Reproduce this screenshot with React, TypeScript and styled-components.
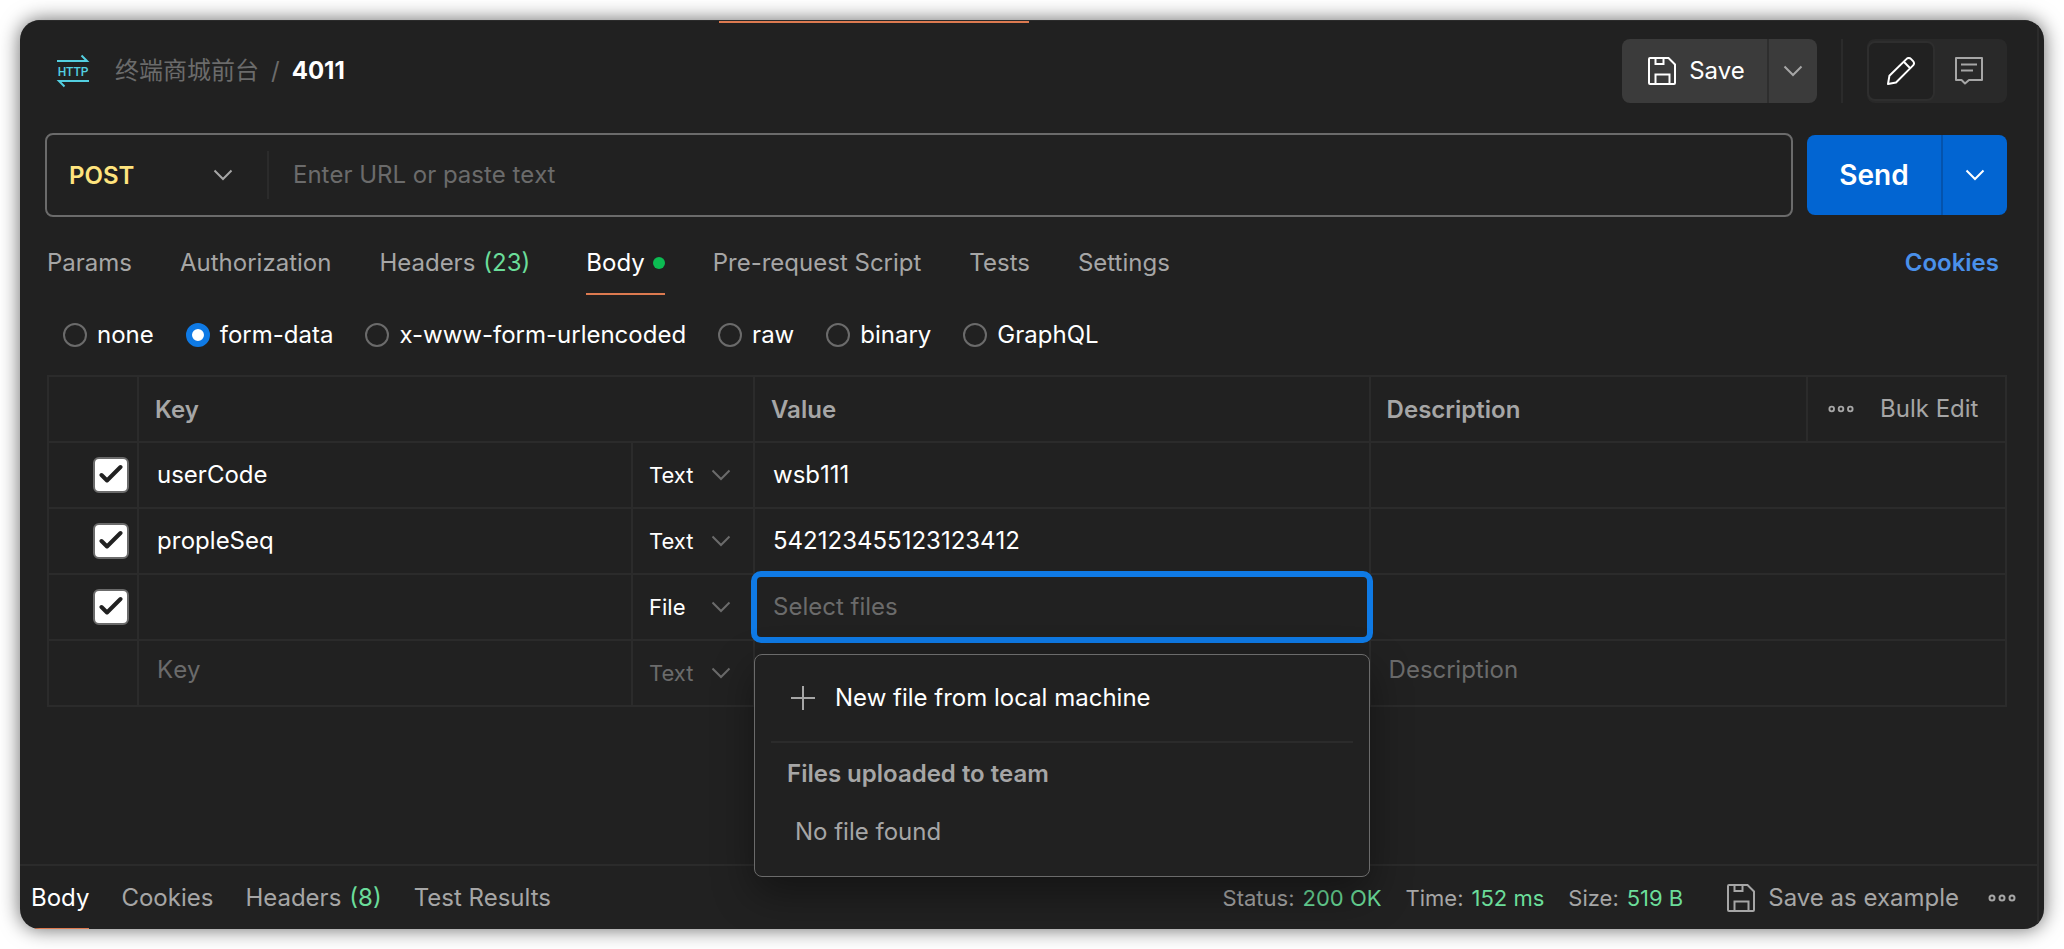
import React from "react";
import styled, { createGlobalStyle } from "styled-components";

const GlobalStyle = createGlobalStyle`
  * { box-sizing: border-box; }
  html { background: #ffffff; }
  body { margin: 0; }
  body, button, input, select, table {
    font-family: Inter, "Noto Sans CJK SC", sans-serif;
    font-size: 24px;
    line-height: 32px;
  }
  button { cursor: pointer; }
  svg { display: block; flex: none; }
`;

const color = {
  bg: "#212121",
  line: "#2b2b2b",
  outline: "#6b6b6b",
  muted: "#a6a6a6",
  faint: "#6b6b6b",
  text: "#ffffff",
  green: "#6bdd9a",
  orange: "#dd7a50",
  blue: "#0265d2",
};

const Page = styled.div`
  min-height: 100vh;
  padding: 20px;
  display: flex;
`;

const Window = styled.div`
  flex: 1;
  min-width: 0;
  display: flex;
  flex-direction: column;
  padding-right: 5px;
  border-radius: 20px;
  overflow: hidden;
  background: ${color.bg};
  box-shadow: 0 0 20px rgba(0, 0, 0, 0.6);
`;

const Pane = styled.div`
  flex: 1;
  display: flex;
  flex-direction: column;
  border-right: 2px solid ${color.line};
`;

const TabStrip = styled.div`
  height: 3px;
  border-top: 1px solid ${color.line};
`;

const ActiveTabLine = styled.div`
  height: 2px;
  width: 310px;
  margin-left: 699px;
  background: ${color.orange};
`;

const Request = styled.main`
  flex: 1;
  padding: 16px 30px 23px 25px;
`;

const Header = styled.header`
  display: flex;
  align-items: center;
  justify-content: space-between;
`;

const Crumbs = styled.nav`
  display: flex;
  align-items: center;
  gap: 12px;
  padding-left: 12px;
  color: ${color.faint};
`;

const CrumbLink = styled.a`
  margin-left: 14px;
  color: inherit;
  text-decoration: none;
`;

const CrumbName = styled.strong`
  font-weight: 700;
  font-kerning: none;
  color: ${color.text};
`;

const HeaderActions = styled.div`
  display: flex;
  gap: 24px;
`;

const SplitButton = styled.div<{ $tone: "neutral" | "primary" }>`
  display: flex;
  flex: none;
  height: ${(p) => (p.$tone === "primary" ? 80 : 64)}px;
  border-radius: 8px;
  overflow: hidden;
  background: ${(p) => (p.$tone === "primary" ? color.blue : "#3b3b3b")};

  button + button {
    border-left: 2px solid ${(p) => (p.$tone === "primary" ? "#0453ad" : "#2e2e2e")};
  }
`;

const PlainButton = styled.button`
  display: flex;
  align-items: center;
  justify-content: center;
  padding: 0;
  border: 0;
  background: none;
  color: ${color.muted};
`;

const SaveButton = styled(PlainButton)`
  gap: 13px;
  width: 145px;
  padding-left: 4px;
  color: ${color.text};
`;

const SaveMenuButton = styled(PlainButton)`
  width: 50px;
`;

const SendButton = styled(PlainButton)`
  width: 134px;
  font-size: 28px;
  font-weight: 600;
  color: ${color.text};
`;

const SendMenuButton = styled(PlainButton)`
  width: 66px;
  color: ${color.text};
`;

const Divider = styled.div`
  width: 2px;
  background: ${color.line};
`;

const ViewToggle = styled.div`
  display: flex;
  padding: 2px 4px 2px 0;
  border-radius: 8px;
  background: #292929;
`;

const ViewButton = styled(PlainButton)<{ $active?: boolean }>`
  width: 68px;
  border: 2px solid ${(p) => (p.$active ? "#2e2e2e" : "transparent")};
  border-radius: 8px;
  background: ${(p) => (p.$active ? color.bg : "transparent")};
  color: ${(p) => (p.$active ? color.text : color.muted)};
`;

const UrlRow = styled.form`
  display: flex;
  align-items: center;
  gap: 14px;
  margin-top: 30px;
`;

const UrlBox = styled.div`
  flex: 1;
  display: flex;
  align-items: center;
  height: 84px;
  border: 2px solid ${color.outline};
  border-radius: 8px;
`;

const SelectWrap = styled.div`
  position: relative;
  height: 100%;
  display: flex;
`;

const SelectChevron = styled.span<{ $right: number; $bright?: boolean }>`
  position: absolute;
  top: 0;
  bottom: 0;
  right: ${(p) => p.$right}px;
  display: flex;
  align-items: center;
  pointer-events: none;
  color: ${(p) => (p.$bright ? color.muted : color.faint)};
`;

const MethodSelect = styled.select`
  appearance: none;
  width: 220px;
  padding: 2px 22px 0;
  border: 0;
  outline: 0;
  background: none;
  font-weight: 600;
  color: #ffe47e;
`;

const UrlDivider = styled(Divider)`
  height: 48px;
`;

const TextInput = styled.input`
  display: block;
  width: 100%;
  height: 64px;
  padding: 0 18px 2px;
  border: 0;
  outline: 0;
  background: none;
  font-kerning: none;
  color: ${color.text};

  &::placeholder {
    color: ${color.faint};
    opacity: 1;
  }
`;

const UrlInput = styled(TextInput)`
  flex: 1;
  padding: 0 24px 2px;
`;

const DraftInput = styled(TextInput)`
  height: 58px;
  margin-bottom: 6px;
`;

const Tabs = styled.nav`
  display: flex;
  gap: 48px;
  margin: 18px 0 0 2px;
`;

const Tab = styled.button<{ $active?: boolean; $counted?: boolean }>`
  display: flex;
  align-items: center;
  gap: 8px;
  height: 60px;
  padding: 0 ${(p) => (p.$counted ? 8 : 0)}px 2px 0;
  border: 0;
  border-bottom: 2px solid ${(p) => (p.$active ? color.orange : "transparent")};
  background: none;
  white-space: nowrap;
  color: ${(p) => (p.$active ? color.text : color.muted)};
`;

const Count = styled.span`
  color: ${color.green};
`;

const Dot = styled.span`
  width: 12px;
  height: 12px;
  border-radius: 50%;
  background: #0cbb52;
`;

const CookiesLink = styled.a`
  margin-left: auto;
  padding: 12px 8px 0 0;
  font-weight: 600;
  color: #4a90ea;
  text-decoration: none;
`;

const Modes = styled.fieldset`
  display: flex;
  gap: 32px;
  margin: 24px 0 0 18px;
  padding: 0;
  border: 0;
`;

const Mode = styled.label`
  display: flex;
  align-items: center;
  gap: 10px;
  color: ${color.text};
`;

const Radio = styled.input`
  appearance: none;
  width: 24px;
  height: 24px;
  margin: 0;
  border: 2px solid ${color.outline};
  border-radius: 50%;

  &:checked {
    border: 6px solid #0f7ae5;
    background: #ffffff;
  }
`;

const Params = styled.table`
  width: calc(100% - 2px);
  margin: 24px 0 0 2px;
  table-layout: fixed;
  border-spacing: 0;
  border: solid ${color.line};
  border-width: 2px 0 0 2px;
  color: ${color.muted};
`;

const Th = styled.th`
  height: 66px;
  padding: 2px 16px 0;
  border: solid ${color.line};
  border-width: 0 2px 2px 0;
  text-align: left;
  font-weight: 600;
`;

const Td = styled.td`
  position: relative;
  height: 66px;
  padding: 0;
  border: solid ${color.line};
  border-width: 0 2px 2px 0;
`;

const HeadTools = styled.div`
  display: flex;
  align-items: center;
  gap: 26px;
  padding: 0 0 2px 4px;
`;

const CheckLabel = styled.label`
  display: flex;
  justify-content: flex-end;
  padding-right: 8px;
`;

const CheckBox = styled.input`
  appearance: none;
  width: 36px;
  height: 36px;
  margin: 0;
  border: 2px solid ${color.outline};
  border-radius: 6px;
  background: #ffffff;
`;

const Tick = styled.svg`
  position: absolute;
  right: 14px;
  top: 20px;
  pointer-events: none;
`;

const TypeSelect = styled.select<{ $draft?: boolean }>`
  appearance: none;
  width: 100%;
  height: 64px;
  padding: 0 16px;
  border: 0;
  outline: 0;
  background: none;
  font-size: 22px;
  color: ${(p) => (p.$draft ? color.faint : color.text)};
`;

const FileField = styled.div`
  position: absolute;
  z-index: 1;
  inset: -4px;
  border: 6px solid #0f7ae5;
  border-radius: 10px;
  background: ${color.bg};
`;

const FileInput = styled(TextInput)`
  height: 100%;
  padding: 0 16px 2px;
`;

const FileMenu = styled.div`
  position: absolute;
  z-index: 2;
  top: 79px;
  left: -1px;
  right: -1px;
  height: 223px;
  padding: 8px 16px;
  border: 1px solid ${color.outline};
  border-radius: 8px;
  background: ${color.bg};
  box-shadow: 0 16px 40px rgba(0, 0, 0, 0.4);
`;

const NewFileButton = styled(PlainButton)`
  justify-content: flex-start;
  gap: 20px;
  width: 100%;
  height: 80px;
  padding: 0 20px 8px;
  border-bottom: 2px solid ${color.line};
  color: ${color.text};
`;

const MenuHeading = styled.h3`
  margin: 15px 16px 0;
  font-size: 24px;
  font-weight: 600;
  line-height: 32px;
  color: ${color.muted};
`;

const MenuNote = styled.p`
  margin: 26px 24px 0;
  color: ${color.muted};
`;

const ResponseBar = styled.footer`
  display: flex;
  align-items: flex-start;
  justify-content: space-between;
  height: 65px;
  padding: 0 20px 0 11px;
  border-top: 2px solid ${color.line};
  color: ${color.muted};
`;

const ResponseTabs = styled.nav`
  display: flex;
  gap: 32px;
`;

const ResponseTab = styled(Tab)`
  height: 64px;
  padding: 2px 0 0;
`;

const Meta = styled.div`
  display: flex;
  align-items: center;
  height: 64px;
  gap: 24px;
  font-size: 22px;
`;

const MetaItem = styled.span`
  display: flex;
  gap: 8px;
  white-space: nowrap;
`;

const ExampleButton = styled(PlainButton)`
  gap: 13px;
  margin: 0 4px 0 20px;
`;

const Chevron = () => (
  <svg width="20" height="12" viewBox="0 0 20 12" fill="none" stroke="currentColor" strokeWidth="2">
    <path d="M1.5 1.5 10 10l8.5-8.5" />
  </svg>
);

const SaveIcon = () => (
  <svg width="28" height="28" viewBox="0 0 28 28" fill="none" stroke="currentColor" strokeWidth="2">
    <path d="M1 2a1 1 0 0 1 1-1h18.500l6.500 6.500V26a1 1 0 0 1-1 1H2a1 1 0 0 1-1-1z" />
    <path d="M7.500 1v6h8V1M7.500 27V17.500h14V27" />
  </svg>
);

const PencilIcon = () => (
  <svg width="28" height="28" viewBox="0 0 28 28" fill="none" stroke="currentColor" strokeWidth="2" strokeLinejoin="round">
    <path d="M1 27l1.400-8.200L19.600 1.900a3 3 0 0 1 4.300 0l2.200 2.200a3 3 0 0 1 0 4.300L9 25.500z" />
    <path d="M16.800 4.800l6.400 6.400" />
  </svg>
);

const CommentIcon = () => (
  <svg width="28" height="28" viewBox="0 0 28 28" fill="none" stroke="currentColor" strokeWidth="2" strokeLinejoin="round">
    <path d="M1 1h26v22H14l-4 3.500L6.500 23H1z" />
    <path d="M6 7.500h16M6 13.500h12" />
  </svg>
);

const PlusIcon = () => (
  <svg width="24" height="24" viewBox="0 0 24 24" fill="none" stroke={color.muted} strokeWidth="2">
    <path d="M12 0v24M0 12h24" />
  </svg>
);

const DotsIcon = ({ size }: { size: number }) => (
  <svg width={size} height="8" viewBox="0 0 28 8" fill="none" stroke="currentColor" strokeWidth="2">
    <circle cx="4" cy="4" r="2.500" />
    <circle cx="14" cy="4" r="2.500" />
    <circle cx="24" cy="4" r="2.500" />
  </svg>
);

const HttpIcon = () => (
  <svg width="32" height="32" viewBox="0 0 32 32" overflow="visible" fill="none" stroke="#53cfe0" strokeWidth="2">
    <path d="M0 6h30L24.500.500M32 26H2l5.500 5.500" />
    <text
      x="16"
      y="21"
      textAnchor="middle"
      fontFamily="Roboto, sans-serif"
      fontSize="12"
      fontWeight="500"
      fill="#53cfe0"
      stroke="none"
    >
      HTTP
    </text>
  </svg>
);

const TickIcon = () => (
  <Tick width="24" height="24" viewBox="0 0 24 24" fill="none" stroke={color.bg} strokeWidth="4" strokeLinecap="round" strokeLinejoin="round">
    <path d="M2.500 12 8 17.500 21.500 4" />
  </Tick>
);

type RowData = { id: string; kind: "Text" | "File"; name: string; value: string };

const rows: RowData[] = [
  { id: "r1", kind: "Text", name: "userCode", value: "wsb111" },
  { id: "r2", kind: "Text", name: "propleSeq", value: "542123455123123412" },
  { id: "r3", kind: "File", name: "", value: "" },
];

const modes = ["none", "form-data", "x-www-form-urlencoded", "raw", "binary", "GraphQL"];

const TypeCell = ({ kind, draft }: { kind: string; draft?: boolean }) => (
  <Td>
    <TypeSelect $draft={draft} defaultValue={kind} aria-label="Field type">
      <option>Text</option>
      <option>File</option>
    </TypeSelect>
    <SelectChevron $right={22}>
      <Chevron />
    </SelectChevron>
  </Td>
);

const FilePicker = () => (
  <>
    <FileField>
      <FileInput placeholder="Select files" aria-label="Select files" />
    </FileField>
    <FileMenu>
      <NewFileButton type="button">
        <PlusIcon />
        New file from local machine
      </NewFileButton>
      <MenuHeading>Files uploaded to team</MenuHeading>
      <MenuNote>No file found</MenuNote>
    </FileMenu>
  </>
);

const ParamRow = ({ row }: { row: RowData }) => (
  <tr>
    <Td>
      <CheckLabel>
        <CheckBox type="checkbox" defaultChecked aria-label="Include field" />
        <TickIcon />
      </CheckLabel>
    </Td>
    <Td>
      <TextInput defaultValue={row.name} aria-label="Key" />
    </Td>
    <TypeCell kind={row.kind} />
    <Td>{row.kind === "File" ? <FilePicker /> : <TextInput defaultValue={row.value} aria-label="Value" />}</Td>
    <Td colSpan={2}>
      <TextInput aria-label="Description" />
    </Td>
  </tr>
);

const Col = styled.col<{ $width?: string }>`
  width: ${(p) => p.$width ?? "auto"};
`;

const ParamsTable = () => (
  <Params>
    <colgroup>
      <Col $width="90px" />
      <Col $width="25.23%" />
      <Col $width="122px" />
      <Col $width="31.44%" />
      <Col />
      <Col $width="199px" />
    </colgroup>
    <thead>
      <tr>
        <Th />
        <Th colSpan={2}>Key</Th>
        <Th>Value</Th>
        <Th>Description</Th>
        <Th>
          <HeadTools>
            <PlainButton type="button" aria-label="More options">
              <DotsIcon size={26} />
            </PlainButton>
            <PlainButton type="button">Bulk Edit</PlainButton>
          </HeadTools>
        </Th>
      </tr>
    </thead>
    <tbody>
      {rows.map((row) => (
        <ParamRow key={row.id} row={row} />
      ))}
      <tr>
        <Td />
        <Td>
          <DraftInput placeholder="Key" aria-label="Key" />
        </Td>
        <TypeCell kind="Text" draft />
        <Td />
        <Td colSpan={2}>
          <DraftInput placeholder="Description" aria-label="Description" />
        </Td>
      </tr>
    </tbody>
  </Params>
);

export default function App() {
  return (
    <>
      <GlobalStyle />
      <Page>
        <Window>
          <TabStrip>
            <ActiveTabLine />
          </TabStrip>
          <Pane>
            <Request>
              <Header>
                <Crumbs>
                  <HttpIcon />
                  <CrumbLink href="#collection">终端商城前台</CrumbLink>
                  <span>/</span>
                  <CrumbName>4011</CrumbName>
                </Crumbs>
                <HeaderActions>
                  <SplitButton $tone="neutral">
                    <SaveButton type="button">
                      <SaveIcon />
                      Save
                    </SaveButton>
                    <SaveMenuButton type="button" aria-label="Save options">
                      <Chevron />
                    </SaveMenuButton>
                  </SplitButton>
                  <Divider />
                  <ViewToggle>
                    <ViewButton type="button" $active aria-label="Edit">
                      <PencilIcon />
                    </ViewButton>
                    <ViewButton type="button" aria-label="Comments">
                      <CommentIcon />
                    </ViewButton>
                  </ViewToggle>
                </HeaderActions>
              </Header>

              <UrlRow>
                <UrlBox>
                  <SelectWrap>
                    <MethodSelect aria-label="Method" defaultValue="POST">
                      <option>GET</option>
                      <option>POST</option>
                    </MethodSelect>
                    <SelectChevron $right={34} $bright>
                      <Chevron />
                    </SelectChevron>
                  </SelectWrap>
                  <UrlDivider />
                  <UrlInput placeholder="Enter URL or paste text" aria-label="Request URL" />
                </UrlBox>
                <SplitButton $tone="primary">
                  <SendButton type="button">Send</SendButton>
                  <SendMenuButton type="button" aria-label="Send options">
                    <Chevron />
                  </SendMenuButton>
                </SplitButton>
              </UrlRow>

              <Tabs>
                <Tab>Params</Tab>
                <Tab>Authorization</Tab>
                <Tab $counted>
                  Headers <Count>(23)</Count>
                </Tab>
                <Tab $active>
                  Body <Dot />
                </Tab>
                <Tab>Pre-request Script</Tab>
                <Tab>Tests</Tab>
                <Tab>Settings</Tab>
                <CookiesLink href="#cookies">Cookies</CookiesLink>
              </Tabs>

              <Modes>
                {modes.map((mode) => (
                  <Mode key={mode}>
                    <Radio type="radio" name="mode" defaultChecked={mode === "form-data"} />
                    {mode}
                  </Mode>
                ))}
              </Modes>

              <ParamsTable />
            </Request>

            <ResponseBar>
              <ResponseTabs>
                <ResponseTab $active>Body</ResponseTab>
                <ResponseTab>Cookies</ResponseTab>
                <ResponseTab>
                  Headers <Count>(8)</Count>
                </ResponseTab>
                <ResponseTab>Test Results</ResponseTab>
              </ResponseTabs>
              <Meta>
                <MetaItem>
                  Status: <Count>200 OK</Count>
                </MetaItem>
                <MetaItem>
                  Time: <Count>152 ms</Count>
                </MetaItem>
                <MetaItem>
                  Size: <Count>519 B</Count>
                </MetaItem>
                <ExampleButton type="button">
                  <SaveIcon />
                  Save as example
                </ExampleButton>
                <PlainButton type="button" aria-label="More actions">
                  <DotsIcon size={30} />
                </PlainButton>
              </Meta>
            </ResponseBar>
          </Pane>
        </Window>
      </Page>
    </>
  );
}
